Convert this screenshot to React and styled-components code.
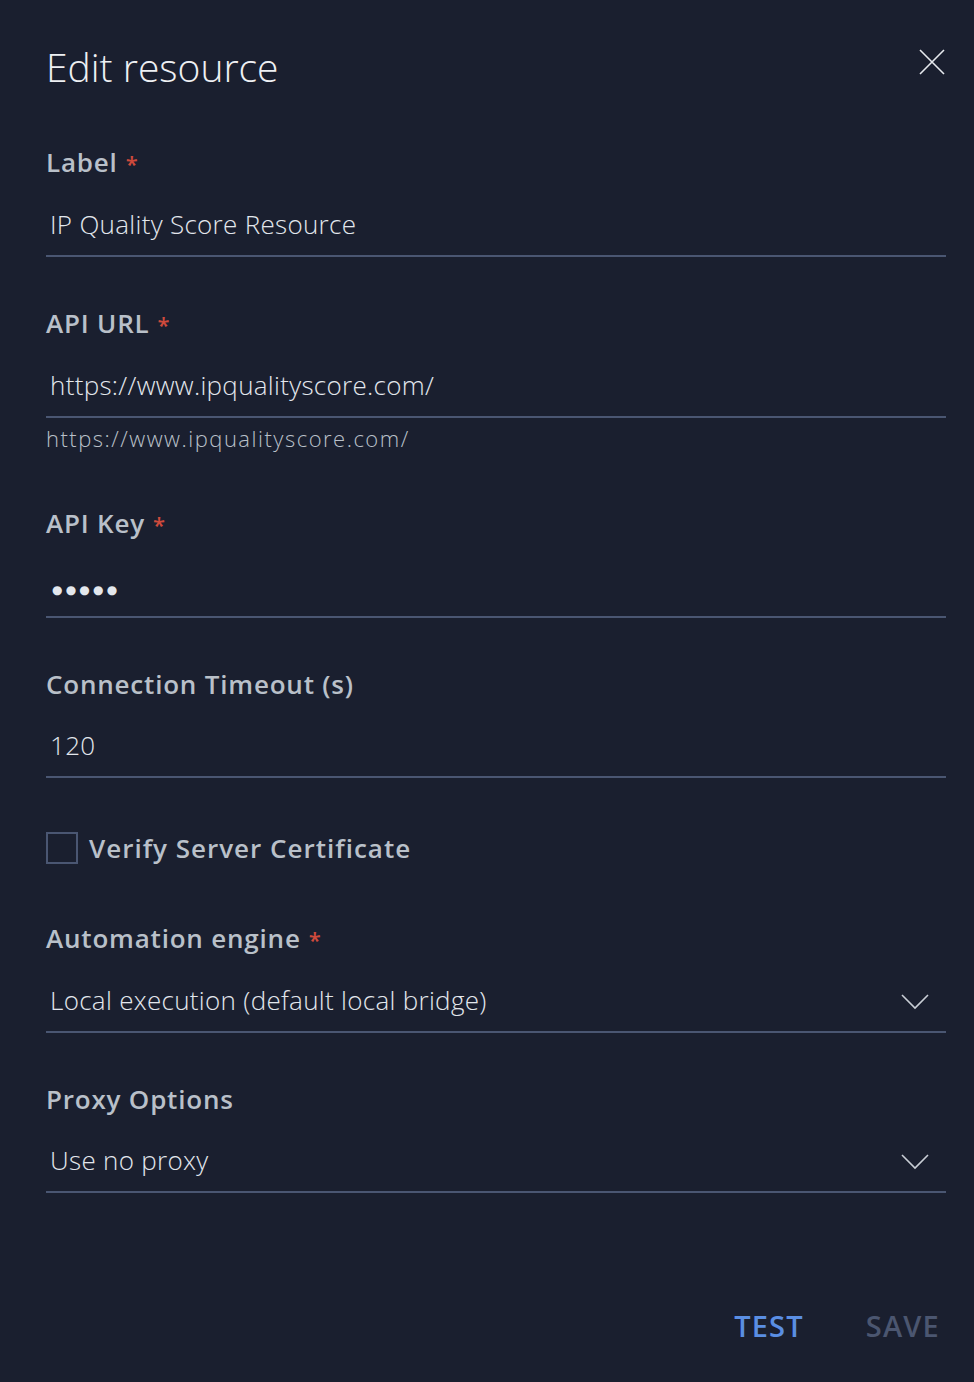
import React from "react";
import styled, { createGlobalStyle } from "styled-components";

const GlobalStyle = createGlobalStyle`
  html, body {
    margin: 0;
    padding: 0;
    background: #1a1f2f;
  }
  body {
    font-family: "Open Sans", "Lato", sans-serif;
    -webkit-font-smoothing: antialiased;
  }
`;

const fields = [
  { label: "Label", required: true, value: "IP Quality Score Resource" },
  {
    label: "API URL",
    required: true,
    value: "https://www.ipqualityscore.com/",
    hint: "https://www.ipqualityscore.com/",
  },
  { label: "API Key", required: true, value: "●●●●●", secret: true },
  { label: "Connection Timeout (s)", value: "120" },
];

const selects = [
  {
    label: "Automation engine",
    required: true,
    value: "Local execution (default local bridge)",
  },
  { label: "Proxy Options", value: "Use no proxy" },
];

const App = () => {
  return (
    <>
      <GlobalStyle />
      <Panel>
        <Header>
          <Title>Edit resource</Title>
          <CloseButton aria-label="Close">
            <svg width="26" height="26" viewBox="0 0 26 26">
              <path
                d="M1 1 L25 25 M25 1 L1 25"
                stroke="#e6e9ee"
                strokeWidth="1.6"
                fill="none"
              />
            </svg>
          </CloseButton>
        </Header>

        <Form>
          {fields.map((f) => (
            <Field key={f.label} hasHint={!!f.hint}>
              <FieldLabel>
                {f.label}
                {f.required && <Star>*</Star>}
              </FieldLabel>
              <InputRow>
                {f.secret ? <Secret>{f.value}</Secret> : <Value>{f.value}</Value>}
              </InputRow>
              {f.hint && <Hint>{f.hint}</Hint>}
            </Field>
          ))}

          <CheckRow>
            <CheckBox />
            <CheckText>Verify Server Certificate</CheckText>
          </CheckRow>

          {selects.map((s) => (
            <Field key={s.label}>
              <FieldLabel>
                {s.label}
                {s.required && <Star>*</Star>}
              </FieldLabel>
              <InputRow>
                <Value>{s.value}</Value>
                <Chevron width="28" height="16" viewBox="0 0 28 16">
                  <path
                    d="M1 1 L14 14 L27 1"
                    stroke="#c9ced6"
                    strokeWidth="1.6"
                    fill="none"
                  />
                </Chevron>
              </InputRow>
            </Field>
          ))}
        </Form>

        <Footer>
          <ActionButton primary>TEST</ActionButton>
          <ActionButton>SAVE</ActionButton>
        </Footer>
      </Panel>
    </>
  );
};

export default App;

const Panel = styled.div`
  width: 974px;
  height: 1382px;
  box-sizing: border-box;
  padding: 0 28px 0 46px;
  background: #1a1f2f;
  display: flex;
  flex-direction: column;
`;

const Header = styled.div`
  display: flex;
  align-items: center;
  justify-content: space-between;
  height: 132px;
  margin-bottom: 12px;
`;

const Title = styled.h1`
  margin: 0;
  font-size: 39px;
  font-weight: 300;
  color: #eef0f3;
`;

const CloseButton = styled.button`
  background: none;
  border: none;
  padding: 0;
  margin-right: 1px;
  margin-top: -8px;
  display: flex;
  cursor: pointer;
`;

const Form = styled.div`
  display: flex;
  flex-direction: column;
`;

const Field = styled.div`
  display: flex;
  flex-direction: column;
  margin-bottom: ${(p) => (p.hasHint ? "52px" : "48px")};
`;

const FieldLabel = styled.div`
  font-size: 26px;
  line-height: 36px;
  font-weight: 600;
  color: #b9c0c9;
  letter-spacing: 0.8px;
`;

const Star = styled.span`
  color: #cf4a3c;
  margin-left: 8px;
  font-size: 22px;
`;

const InputRow = styled.div`
  display: flex;
  align-items: center;
  justify-content: space-between;
  height: 74px;
  padding: 0 17px 0 4px;
  border-bottom: 2px solid #4a5672;
`;

const Value = styled.div`
  font-size: 26px;
  font-weight: 300;
  color: #e3e7ed;
  letter-spacing: 0.3px;
  padding-top: 12px;
`;

const Secret = styled.div`
  font-family: "DejaVu Sans", sans-serif;
  font-size: 12px;
  color: #e3e7ed;
  letter-spacing: 3.2px;
  padding-top: 22px;
  padding-left: 2px;
`;

const Chevron = styled.svg`
  display: block;
  margin-top: 16px;
`;

const Hint = styled.div`
  margin-top: 5px;
  font-size: 22px;
  font-weight: 300;
  color: #b9c0c9;
  letter-spacing: 1.5px;
`;

const CheckRow = styled.label`
  display: flex;
  align-items: center;
  gap: 11px;
  margin-top: 4px;
  margin-bottom: 54px;
`;

const CheckBox = styled.span`
  width: 28px;
  height: 28px;
  border: 2px solid #4a5672;
`;

const CheckText = styled.span`
  font-size: 26px;
  font-weight: 600;
  color: #b9c0c9;
  letter-spacing: 1px;
`;

const Footer = styled.div`
  margin-top: auto;
  display: flex;
  justify-content: flex-end;
  gap: 62px;
  padding: 0 6px 37px 0;
`;

const ActionButton = styled.button`
  background: none;
  border: none;
  padding: 0;
  font-family: inherit;
  font-size: 29px;
  font-weight: 600;
  letter-spacing: 1.2px;
  color: ${(p) => (p.primary ? "#5a8ee3" : "#4b5670")};
  cursor: pointer;
`;
